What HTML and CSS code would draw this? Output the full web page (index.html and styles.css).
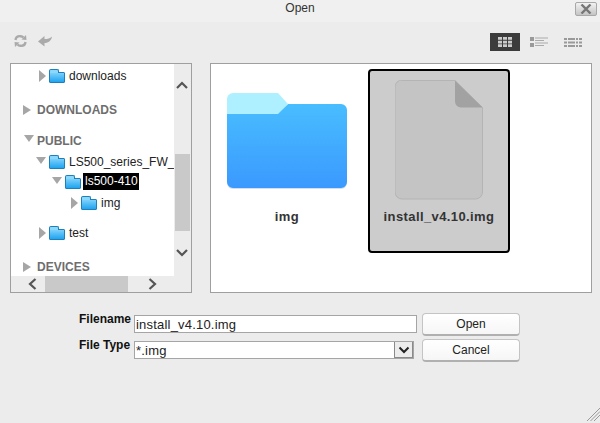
FILE: index.html
```html
<!DOCTYPE html>
<html>
<head>
<meta charset="utf-8">
<title>Open</title>
<link rel="stylesheet" href="styles.css">
</head>
<body>
<div class="dialog">
  <header class="titlebar">
    <span class="title">Open</span>
    <button class="close" aria-label="Close"><svg width="12" height="10" viewBox="0 0 12 10"><path d="M1.500 .5 L10.500 9.500 M10.500 .5 L1.500 9.500" stroke="#777" stroke-width="2.400" fill="none"/></svg></button>
  </header>
  <div class="toolbar">
    <div class="tools">
      <svg width="13" height="14" viewBox="0 0 13 14"><path d="M1.500 6 C1.800 3.200 4 2 6.500 2.200 C7.800 2.300 8.800 2.800 9.500 3.500" stroke="#aaa" stroke-width="2.400" fill="none"/><path d="M7.500 5.500 L12.500 6 L12 1 Z" fill="#aaa"/><path d="M11.500 8 C11.200 10.800 9 12 6.500 11.800 C5.200 11.700 4.200 11.200 3.500 10.500" stroke="#aaa" stroke-width="2.400" fill="none"/><path d="M5.500 8.500 L.5 8 L1 13 Z" fill="#aaa"/></svg>
      <svg width="14" height="12" viewBox="0 0 14 12"><path d="M0 6.500 L6.500 1 V4 C9.500 4 12 3.500 14 1.500 C13.500 5.500 10.500 8 6.500 8 V11.500 Z" fill="#aaa"/></svg>
    </div>
    <div class="views">
      <span class="view active"><svg width="14" height="10" viewBox="0 0 14 10"><path d="M0 0h4v2.800H0zM5 0h4v2.800H5zM10 0h4v2.800h-4zM0 3.800h4v2.800H0zM5 3.800h4v2.800H5zM10 3.800h4v2.800h-4zM0 7.200h4V10H0zM5 7.200h4V10H5zM10 7.200h4V10h-4z" fill="#ccc"/></svg></span>
      <span class="view"><svg width="18" height="10" viewBox="0 0 18 10"><path d="M0 0h4v4H0zM0 6h4v4H0z" fill="#999"/><path d="M5 .5h13v1H5zM5 3h9v1H5zM5 5.500h13v1H5zM5 8h9v1H5z" fill="#aaa"/></svg></span>
      <span class="view"><svg width="18" height="9" viewBox="0 0 18 9"><path d="M0 0h3v2H0zM4 0h7v2H4zM12 0h2v2h-2zM15 0h3v2h-3zM0 3.500h3v2H0zM4 3.500h7v2H4zM12 3.500h2v2h-2zM15 3.500h3v2h-3zM0 7h3v2H0zM4 7h7v2H4zM12 7h2v2h-2zM15 7h3v2h-3z" fill="#999"/></svg></span>
    </div>
  </div>
  <main class="panes">
    <section class="tree-pane">
      <div class="tree-row">
        <ul class="tree">
          <li class="node lvl1"><i class="tri right"></i><i class="mini"></i><span>downloads</span></li>
          <li class="node section r-dl"><i class="tri right sec"></i><span>DOWNLOADS</span></li>
          <li class="node section r-pub"><i class="tri down sec"></i><span>PUBLIC</span></li>
          <li class="node lvl1"><i class="tri down"></i><i class="mini"></i><span>LS500_series_FW_</span></li>
          <li class="node lvl2"><i class="tri down"></i><i class="mini"></i><span class="sel">ls500-410</span></li>
          <li class="node lvl3"><i class="tri right"></i><i class="mini"></i><span>img</span></li>
          <li class="node lvl1 r-test"><i class="tri right"></i><i class="mini"></i><span>test</span></li>
          <li class="node section r-dev"><i class="tri right sec"></i><span>DEVICES</span></li>
        </ul>
        <div class="vscroll">
          <svg class="arrow-up" width="12" height="8" viewBox="0 0 12 8"><path d="M1 7 L6 2 L11 7" stroke="#555" stroke-width="2.200" fill="none"/></svg>
          <div class="vthumb"></div>
          <svg class="arrow-down" width="12" height="8" viewBox="0 0 12 8"><path d="M1 1 L6 6 L11 1" stroke="#555" stroke-width="2.200" fill="none"/></svg>
        </div>
      </div>
      <div class="hscroll">
        <svg width="9" height="12" viewBox="0 0 9 12"><path d="M7.500 1 L2 6 L7.500 11" stroke="#555" stroke-width="2.200" fill="none"/></svg>
        <div class="hthumb"></div>
        <svg width="9" height="12" viewBox="0 0 9 12"><path d="M1.500 1 L7 6 L1.500 11" stroke="#555" stroke-width="2.200" fill="none"/></svg>
      </div>
    </section>
    <section class="files">
      <figure class="tile">
        <svg width="120" height="96" viewBox="0 0 120 96">
          <defs>
            <linearGradient id="fg" x1="0" y1="0" x2="0" y2="1"><stop offset="0" stop-color="#49bdff"/><stop offset="1" stop-color="#3a99fe"/></linearGradient>
          </defs>
          <path d="M0 20 H114 a6 6 0 0 1 6 6 V89 a6 6 0 0 1 -6 6 H6 a6 6 0 0 1 -6 -6 Z" fill="#b9c9d8" transform="translate(0 1)" opacity=".6"/>
          <path d="M0 20 H51 L61 11 H114 a6 6 0 0 1 6 6 V89 a6 6 0 0 1 -6 6 H6 a6 6 0 0 1 -6 -6 Z" fill="url(#fg)"/>
          <path d="M0 21 V6 a6 6 0 0 1 6 -6 H51 L61 11 L51 21 Z" fill="#aef0ff"/>
        </svg>
        <figcaption>img</figcaption>
      </figure>
      <figure class="tile selected">
        <svg width="88" height="120" viewBox="0 0 88 120">
          <path d="M7 .5 H60 L87.500 27.500 V112 a7 7 0 0 1 -7 7 H7 a7 7 0 0 1 -7 -7 V7 a7 7 0 0 1 7 -7 Z" fill="#c4c4c4" stroke="#b4b4b4"/>
          <path d="M60 .5 L87.500 27.500 H66 a6 6 0 0 1 -6 -6 Z" fill="#a2a2a2"/>
        </svg>
        <figcaption>install_v4.10.img</figcaption>
      </figure>
    </section>
  </main>
  <form class="form">
    <div class="fields">
      <div class="field">
        <label>Filename</label>
        <div class="input">install_v4.10.img</div>
      </div>
      <div class="field">
        <label>File Type</label>
        <div class="input select">*.img<span class="caret"><svg width="12" height="8" viewBox="0 0 12 8"><path d="M1.500 1.500 L6 6 L10.500 1.500" stroke="#222" stroke-width="2" fill="none"/></svg></span></div>
      </div>
    </div>
    <div class="buttons">
      <button type="button" class="btn">Open</button>
      <button type="button" class="btn">Cancel</button>
    </div>
  </form>
  <svg class="grip" width="13" height="13" viewBox="0 0 13 13"><path d="M0 13 L13 0 M3.500 13 L13 3.500 M7 13 L13 7" stroke="#999" stroke-width="1" fill="none"/></svg>
</div>
</body>
</html>
```
FILE: styles.css
```css
* { box-sizing: border-box; }
html, body { margin: 0; padding: 0; }
body { font-family: "Liberation Sans", Arial, sans-serif; background: #ececec; }
.dialog { position: relative; width: 600px; height: 423px; overflow: hidden; background: #ececec; color: #111; }

.titlebar { height: 22px; background: #f0f0f0; display: flex; justify-content: flex-end; padding: 2px 3px 0 0; position: relative; }
.title { position: absolute; left: 0; right: 0; top: 1px; text-align: center; font-size: 12px; line-height: 14px; color: #333; }
.close { width: 22px; height: 14px; padding: 0; border: 1px solid #a8a8a8; border-radius: 2px; background: linear-gradient(#f2f2f2, #c4c4c4); display: flex; align-items: center; justify-content: center; }

.toolbar { height: 41px; padding: 11px 18px 0 14px; display: flex; justify-content: space-between; }
.tools { display: flex; gap: 11px; align-items: flex-start; padding-top: 1px; }
.tools svg:last-child { margin-top: 1px; }
.views { display: flex; gap: 10px; height: 18px; }
.view { width: 18px; height: 18px; display: flex; align-items: center; justify-content: center; }
.view.active { width: 30px; background: #3c3c3c; }
.view + .view + .view { margin-left: 6px; }

.panes { display: flex; gap: 18px; height: 230px; padding: 0 8px 0 10px; }
.tree-pane { width: 182px; height: 230px; border: 1px solid #9f9f9f; background: #ececec; display: flex; flex-direction: column; }
.tree-row { display: flex; height: 212px; }
.tree { list-style: none; margin: 0; padding: 1px 0 0; width: 163px; height: 212px; background: #fff; overflow: hidden; }
.node { height: 21px; display: flex; align-items: center; white-space: nowrap; font-size: 12px; color: #222; }
.r-dl { margin-top: 13px; }
.r-pub { margin-top: 10px; }
.r-test { margin-top: 9px; }
.r-dev { margin-top: 13px; }
.lvl1 { padding-left: 28px; }
.lvl2 { padding-left: 44px; margin-top: -1px; }
.lvl3 { padding-left: 60px; }
.section { padding-left: 12px; font-weight: 700; color: #6e6e6e; }
.section span { margin-left: 4px; }
.tri { display: block; flex: none; width: 0; height: 0; }
.tri.right { border-left: 7px solid #a6a6a6; border-top: 6px solid transparent; border-bottom: 6px solid transparent; margin-right: 3px; }
.tri.down { border-top: 7px solid #a6a6a6; border-left: 5px solid transparent; border-right: 5px solid transparent; margin-left: -3px; margin-right: 3px; margin-bottom: 2px; }
.tri.sec.right { border-left-width: 8px; border-top-width: 5px; border-bottom-width: 5px; margin-right: 2px; }
.tri.sec.down { margin-left: 1px; margin-right: -1px; margin-bottom: 4px; }
.mini { display: block; position: relative; width: 16px; height: 11px; margin-top: 3px; margin-right: 4px; flex: none; border: 1px solid #1f7fb8; border-radius: 1px; background: linear-gradient(#7bd0fb, #1fa4f0); }
.mini::before { content: ""; position: absolute; left: -1px; top: -4px; width: 8px; height: 3px; border: 1px solid #1f7fb8; border-bottom: 0; border-radius: 2px 2px 0 0; background: #8ad8fb; }
.sel { background: #000; color: #fff; padding: 0 1px 0 2px; line-height: 17px; margin-left: -2px; }

.vscroll { width: 17px; height: 212px; background: #ececec; display: flex; flex-direction: column; align-items: center; padding-right: 1px; }
.arrow-up { margin-top: 17px; }
.vthumb { width: 15px; height: 77px; margin-top: 65px; margin-left: 1px; background: #c9c9c9; }
.arrow-down { margin-top: 18px; }
.hscroll { height: 16px; display: flex; align-items: center; padding: 0 0 0 17px; background: #ececec; }
.hthumb { width: 83px; height: 16px; margin-left: 8px; margin-right: 20px; background: #c9c9c9; }

.files { flex: 1; height: 230px; border: 1px solid #9f9f9f; background: #fff; display: flex; padding: 5px 0 0 16px; gap: 21px; }
.tile { margin: 0; width: 142px; height: 184px; display: flex; flex-direction: column; align-items: center; border: 2px solid transparent; border-radius: 4px; }
.tile:first-child { width: 120px; padding-top: 24px; border: 0; }
.tile figcaption { font-size: 13px; font-weight: 700; line-height: 16px; color: #333; margin-top: 20px; white-space: nowrap; letter-spacing: .4px; }
.tile.selected { background: #ccc; border-color: #000; padding-top: 9px; }
.tile.selected figcaption { margin-top: 9px; }

.form { display: flex; padding: 20px 0 0 79px; gap: 5px; }
.fields { width: 338px; display: flex; flex-direction: column; gap: 8px; padding-top: 2px; }
.field { display: flex; height: 18px; gap: 3px; }
.field label { width: 52px; font-size: 12px; font-weight: 700; line-height: 14px; margin-top: -3px; white-space: nowrap; }
.input { width: 284px; height: 18px; border: 1px solid #a5a5a5; background: #fff; font-size: 13px; line-height: 18px; padding-left: 1px; color: #222; letter-spacing: .2px; }
.select { width: 280px; display: flex; justify-content: space-between; }
.caret { width: 19px; height: 16px; background: #ececec; border: 1px solid #8a8a8a; border-width: 0 1px 1px 1px; display: flex; align-items: center; justify-content: center; }
.buttons { display: flex; flex-direction: column; gap: 3px; }
.btn { width: 98px; height: 23px; border: 1px solid #c4c4c4; border-bottom: 2px solid #b0b0b0; border-radius: 4px; background: linear-gradient(#fff, #f6f6f6); font: 12px/14px "Liberation Sans", Arial, sans-serif; color: #222; padding: 0; }
.grip { position: absolute; right: 0; bottom: 2px; }
```
